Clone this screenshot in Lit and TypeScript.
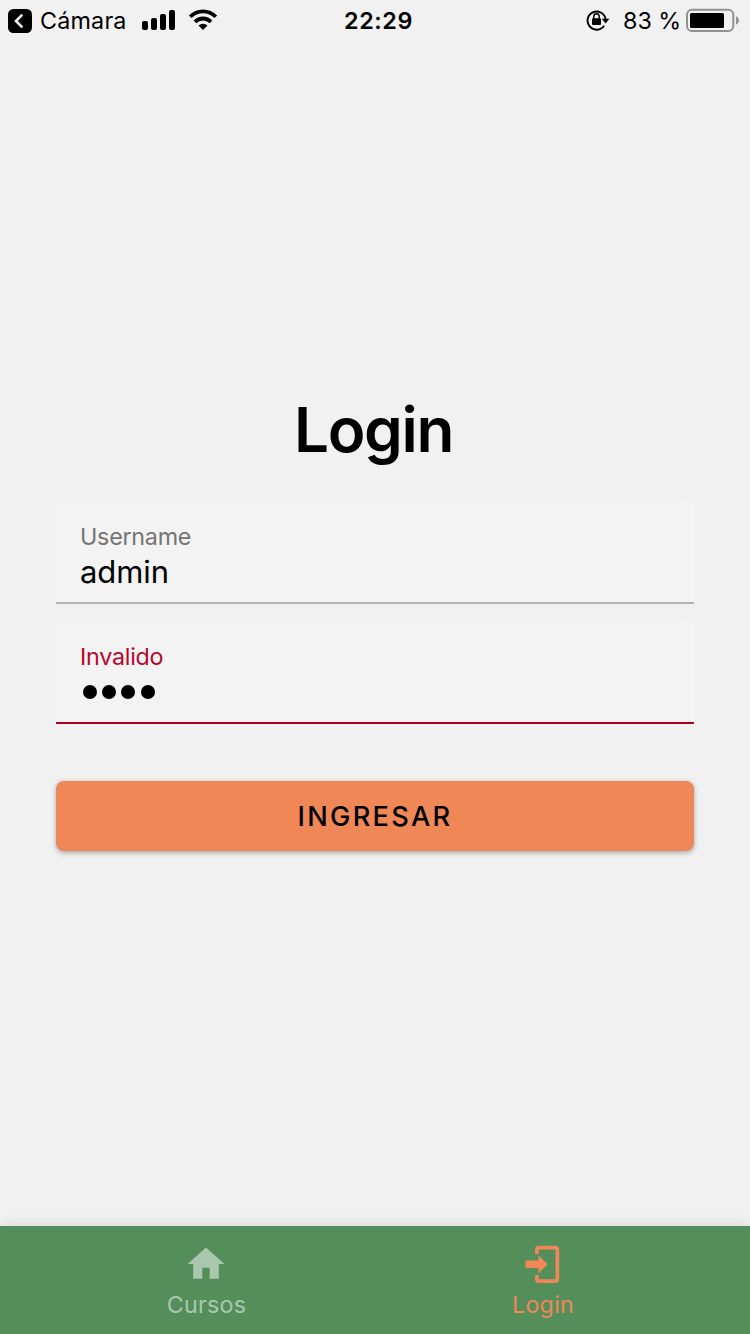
import { LitElement, html, svg, css } from "lit";
import { customElement, property } from "lit/decorators.js";

@customElement("status-bar")
class StatusBar extends LitElement {
  static styles = css`
    :host { display: flex; height: 40px; align-items: center; justify-content: space-between; color: #000; font-size: 23.3px; line-height: 40px; }
    svg { display: block; flex: none; }
    .side { box-sizing: border-box; display: flex; align-items: center; width: 300px; height: 40px; }
    .back { margin: 1px 8px 0 8px; }
    .origin { width: 102px; padding-top: 2px; letter-spacing: 0.2px; }
    .signal { margin-right: 12px; }
    .time { padding: 2px 0 0 7px; font-weight: 600; letter-spacing: 0.6px; }
    .right { justify-content: flex-end; padding-right: 10px; }
    .lock { margin-right: 13px; }
    .percent { width: 63px; padding-top: 2px; white-space: pre; letter-spacing: 0; }
  `;
  render() {
    return html`
      <div class="side">
        <svg class="back" width="24" height="24" viewBox="0 0 24 24"><rect width="24" height="24" rx="5.5" /><path d="M14.3 5.7 8 12l6.3 6.3" fill="none" stroke="#f1f1f1" stroke-width="2.6" /></svg>
        <span class="origin">Cámara</span>
        <svg class="signal" width="34" height="20" viewBox="0 0 34 20"><rect y="11" width="6" height="9" rx="2" /><rect x="9" y="8" width="6" height="12" rx="2" /><rect x="18" y="4" width="6" height="16" rx="2" /><rect x="27" width="6" height="20" rx="2" /></svg>
        <svg width="30" height="22" viewBox="0 0 30 22"><path d="M2.2 7.8a17.8 17.8 0 0 1 25.6 0M7 12.8a11.3 11.3 0 0 1 16 0" fill="none" stroke="#000" stroke-width="3.8" /><path d="m15 21-4.5-4.5a6.4 6.4 0 0 1 9 0Z" /></svg>
      </div>
      <span class="time">22:29</span>
      <div class="side right">
        <svg class="lock" width="24" height="22" viewBox="0 0 24 22"><path d="M18.1 16.8A9.1 9.1 0 1 1 19.6 10" fill="none" stroke="#000" stroke-width="1.9" /><path d="M15.7 9.7h7.7l-3.8 4.7Z" /><rect x="6" y="9.3" width="9" height="6.8" rx="1" /><path d="M7.8 10V7.4a2.7 2.7 0 0 1 5.4 0V10" fill="none" stroke="#000" stroke-width="1.4" /></svg>
        <span class="percent">83 %</span>
        <svg width="54" height="24" viewBox="0 0 54 24"><rect x="1" y="1.8" width="46.3" height="21.2" rx="5" fill="none" stroke="#929292" stroke-width="2" /><rect x="4" y="5" width="34" height="15" rx="1.5" /><path d="M50 8.3c4 1.8 4 6.6 0 8.4Z" fill="#929292" /></svg>
      </div>`;
  }
}

@customElement("text-entry")
class TextEntry extends LitElement {
  @property() label = "";
  @property() value = "";
  @property({ type: Boolean }) secret = false;
  @property({ type: Boolean }) invalid = false;
  static styles = css`
    .field { box-sizing: border-box; height: 104px; padding: 23px 24px 0; background: linear-gradient(#b3b3b3, #b3b3b3) 0 100% / 100% 2px no-repeat #f3f3f3; border-radius: 8px 8px 0 0; }
    .invalid { background-image: linear-gradient(#b00020, #b00020); }
    .label { height: 29px; font-size: 23.3px; line-height: 28px; color: #757575; letter-spacing: -0.25px; }
    .invalid .label { color: #b4082e; }
    .value { font-size: 31px; line-height: 40px; color: #000; letter-spacing: -0.1px; }
    .dots { display: flex; gap: 5.3px; padding: 13px 0 0 2.8px; }
    .dot { width: 14px; height: 14px; border-radius: 50%; background: #000; }
  `;
  render() {
    return html`<div class="field ${this.invalid ? "invalid" : ""}">
      <div class="label">${this.label}</div>
      ${this.secret
        ? html`<div class="dots">${[...this.value].map(() => html`<span class="dot"></span>`)}</div>`
        : html`<div class="value">${this.value}</div>`}
    </div>`;
  }
}

@customElement("app-root")
class AppRoot extends LitElement {
  static styles = css`
    :host { display: flex; flex-direction: column; width: 750px; height: 1334px; overflow: hidden; background: #f1f1f1; font-family: Inter, "Liberation Sans", sans-serif; }
    .content { flex: 1; padding: 350px 56px 0; }
    .title { margin: 0; height: 110px; padding-right: 3px; text-align: center; font-size: 62px; line-height: 80px; font-weight: 600; letter-spacing: -1.3px; }
    .fields { display: flex; flex-direction: column; gap: 16px; }
    .submit { display: block; width: 100%; height: 70px; margin-top: 57px; padding: 2px 0 0; border: 0; border-radius: 8px; background: #ef8757; color: #000; font: 500 27.2px/68px Inter, sans-serif; letter-spacing: 2.3px; box-shadow: 0 1.5px 5px rgba(0, 0, 0, 0.3); }
    .tabs { display: flex; height: 108px; padding: 0 39px 0 37px; background: #548f5b; box-shadow: 0 -1px 12px rgba(0, 0, 0, 0.11); }
    .tab { flex: 1; display: flex; flex-direction: column; align-items: center; padding-top: 16px; color: #a9c7ad; font-size: 23.3px; line-height: 38px; letter-spacing: 0.25px; }
    .tab span { padding-left: 2px; }
    .active { color: #ef8757; }
    .active span { padding-left: 1px; }
    .tab svg { display: block; fill: currentColor; }
  `;
  private home = svg`<path transform="scale(1.8333)" d="M10 20v-6h4v6h5v-8h3L12 3 2 12h3v8Z" />`;
  private login = svg`<path d="M4.4 18.6h13v-5.3l9.4 9-9.4 9v-5.3h-13Z" /><path d="M15.9 12V7.6a2 2 0 0 1 2-2h16.4a2 2 0 0 1 2 2v29.6a2 2 0 0 1-2 2H17.9a2 2 0 0 1-2-2v-4.2" fill="none" stroke="currentColor" stroke-width="3.7" />`;
  render() {
    return html`
      <status-bar></status-bar>
      <main class="content">
        <h1 class="title">Login</h1>
        <div class="fields">
          <text-entry label="Username" value="admin"></text-entry>
          <text-entry label="Invalido" value="0000" secret invalid></text-entry>
        </div>
        <button class="submit">INGRESAR</button>
      </main>
      <nav class="tabs">
        <div class="tab"><svg width="44" height="44" viewBox="0 0 44 44">${this.home}</svg><span>Cursos</span></div>
        <div class="tab active"><svg width="44" height="44" viewBox="0 0 44 44">${this.login}</svg><span>Login</span></div>
      </nav>`;
  }
}
